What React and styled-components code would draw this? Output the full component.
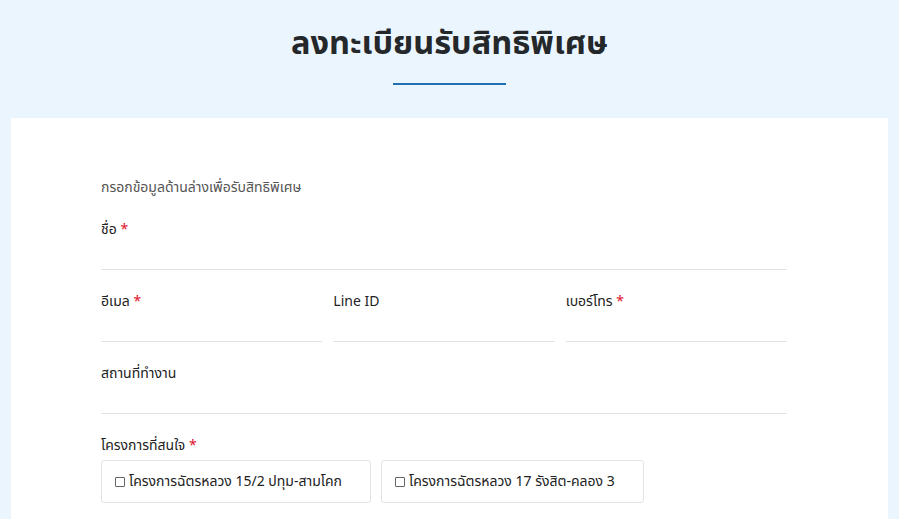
import React from "react";
import styled, { createGlobalStyle } from "styled-components";

const Global = createGlobalStyle`
  html, body { margin: 0; padding: 0; background: #ebf5fe; }
  body { font-family: "Noto Sans Thai", "Noto Sans", "Liberation Sans", sans-serif; color: #222; }
`;

const Page = styled.div`
  min-height: 519px;
  background: #ebf5fe;
  padding: 0 11px;
  display: flex;
  flex-direction: column;
`;

const Header = styled.div`
  height: 118px;
  display: flex;
  flex-direction: column;
  align-items: center;
`;

const Title = styled.h1`
  margin: 22px 0 0;
  font-size: 32.5px;
  font-weight: 700;
  color: #25282b;
  line-height: 46px;
`;

const Underline = styled.div`
  width: 113px;
  height: 2px;
  background: #1f6fb2;
  margin-top: 15px;
`;

const Card = styled.div`
  background: #fff;
  flex: 1;
  padding: 60px 101px 0 90px;
`;

const Intro = styled.p`
  margin: 0 0 22px;
  font-size: 14px;
  color: #555;
  line-height: 20px;
`;

const Field = styled.div`
  display: flex;
  flex-direction: column;
  min-width: 0;
`;

const Label = styled.label`
  font-size: 14px;
  line-height: 20px;
  color: #222;
`;

const Req = styled.span`
  color: #e0102a;
`;

const Input = styled.div`
  height: 29px;
  border-bottom: 1px solid #e2e2e2;
  margin-bottom: ${(p) => (p.$last ? 19 : 22)}px;
`;

const Row = styled.div`
  display: grid;
  grid-template-columns: repeat(3, 1fr);
  gap: 11px;
`;

const Options = styled.div`
  display: flex;
  gap: 10px;
  margin-top: 3px;
`;

const Option = styled.label`
  display: flex;
  align-items: center;
  gap: 4px;
  height: 43px;
  border: 1px solid #e3e3e3;
  border-radius: 3px;
  padding: 0 13px;
  width: ${(p) => p.$w}px;
  box-sizing: border-box;
  font-size: 14px;
  color: #222;
`;

const Box = styled.span`
  width: 8px;
  height: 8px;
  border: 1px solid #666;
  border-radius: 1px;
  flex: none;
`;

export default function App() {
  return (
    <>
      <Global />
      <Page>
        <Header>
          <Title>ลงทะเบียนรับสิทธิพิเศษ</Title>
          <Underline />
        </Header>
        <Card>
          <Intro>กรอกข้อมูลด้านล่างเพื่อรับสิทธิพิเศษ</Intro>
          <Field>
            <Label>ชื่อ <Req>*</Req></Label>
            <Input />
          </Field>
          <Row>
            <Field>
              <Label>อีเมล <Req>*</Req></Label>
              <Input />
            </Field>
            <Field>
              <Label>Line ID</Label>
              <Input />
            </Field>
            <Field>
              <Label>เบอร์โทร <Req>*</Req></Label>
              <Input />
            </Field>
          </Row>
          <Field>
            <Label>สถานที่ทำงาน</Label>
            <Input $last />
          </Field>
          <Label>โครงการที่สนใจ <Req>*</Req></Label>
          <Options>
            <Option $w={270}><Box />โครงการฉัตรหลวง 15/2 ปทุม-สามโคก</Option>
            <Option $w={263}><Box />โครงการฉัตรหลวง 17 รังสิต-คลอง 3</Option>
          </Options>
        </Card>
      </Page>
    </>
  );
}
